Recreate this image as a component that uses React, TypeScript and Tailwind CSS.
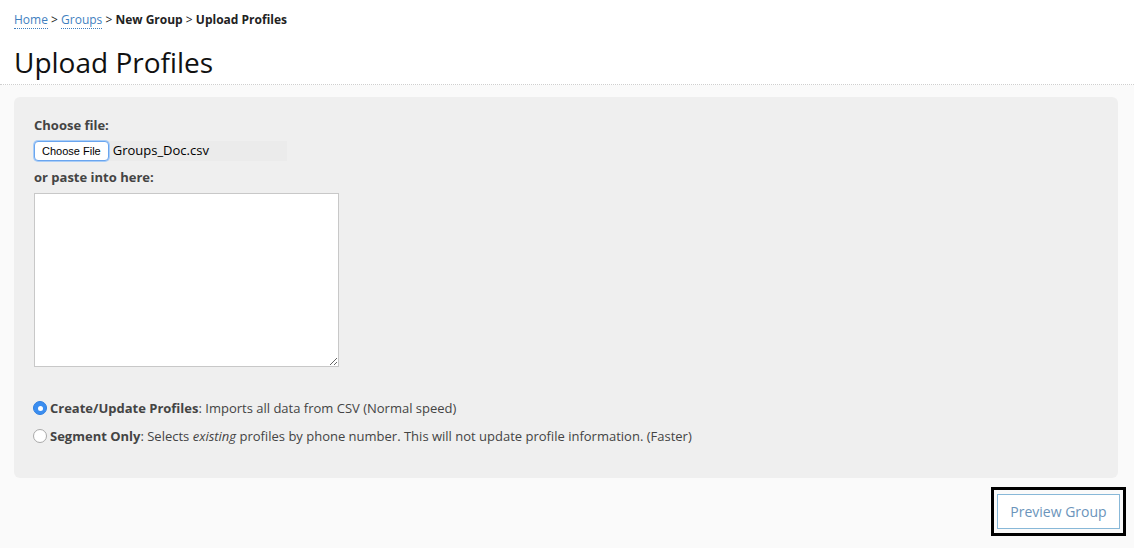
import React, { useState } from 'react';

type Mode = 'update' | 'segment';

const Radio: React.FC<{ checked: boolean; onClick: () => void }> = ({ checked, onClick }) => (
  <span
    onClick={onClick}
    className={
      checked
        ? 'flex h-[14px] w-[14px] shrink-0 items-center justify-center rounded-full bg-[#3b8ef0] border border-[#2f7fe0]'
        : 'flex h-[14px] w-[14px] shrink-0 items-center justify-center rounded-full bg-white border border-[#a9a9a9]'
    }
  >
    {checked && <span className="h-[5px] w-[5px] rounded-full bg-white" />}
  </span>
);

const App: React.FC = () => {
  const [mode, setMode] = useState<Mode>('update');
  const [pasted, setPasted] = useState('');

  return (
    <div className="min-h-[548px] w-full bg-[#fafafa] font-['Open_Sans',sans-serif] text-[#333]">
      <div className="bg-white px-[14px] pt-[11px] border-b border-dotted border-[#cfcfcf]">
        <nav className="text-[12px] leading-[17px] text-[#222]">
          <a href="#" className="text-[#3f7fbf] border-b border-dotted border-[#3f7fbf]">Home</a>
          <span> &gt; </span>
          <a href="#" className="text-[#3f7fbf] border-b border-dotted border-[#3f7fbf]">Groups</a>
          <span> &gt; </span>
          <span className="font-bold">New Group</span>
          <span> &gt; </span>
          <span className="font-bold">Upload Profiles</span>
        </nav>
        <h1 className="mt-[14px] pb-[2px] text-[28px] leading-[40px] text-[#111]">Upload Profiles</h1>
      </div>

      <div className="pl-[14px] pr-[16px] pt-[12px]">
        <div className="rounded-[6px] bg-[#efefef] px-[20px] pt-[19px] pb-[34px]">
          <label className="block text-[13px] font-bold leading-[18px] text-[#444]">Choose file:</label>
          <div className="mt-[7px] flex items-center">
            <div className="flex h-[20px] w-[253px] items-center bg-[#ebebeb]">
              <button className="h-[20px] rounded-[4px] border border-[#6aa5ee] bg-white px-[7px] font-['Liberation_Sans',sans-serif] text-[11px] leading-[16px] text-black shadow-[0_0_0_1px_#a9cdf7]">
                Choose File
              </button>
              <span className="ml-[4px] text-[13px] text-black">Groups_Doc.csv</span>
            </div>
          </div>
          <label className="mt-[7px] block text-[13px] font-bold leading-[18px] text-[#444]">or paste into here:</label>
          <textarea
            value={pasted}
            onChange={(e) => setPasted(e.target.value)}
            className="mt-[7px] block h-[174px] w-[305px] border border-[#c8c8c8] bg-white p-1 text-[13px] outline-none"
          />

          <div className="mt-[33px] flex flex-col gap-[12px] text-[13px] leading-[16px] text-[#444]">
            <label className="-ml-[1px] flex items-center gap-[3px]">
              <Radio checked={mode === 'update'} onClick={() => setMode('update')} />
              <span>
                <b>Create/Update Profiles</b>: Imports all data from CSV (Normal speed)
              </span>
            </label>
            <label className="-ml-[1px] flex items-center gap-[3px]">
              <Radio checked={mode === 'segment'} onClick={() => setMode('segment')} />
              <span>
                <b>Segment Only</b>: Selects <i>existing</i> profiles by phone number. This will not update profile information. (Faster)
              </span>
            </label>
          </div>
        </div>

        <div className="-mr-[8px] mt-[9px] flex justify-end">
          <div className="border-[3px] border-black px-[3px] py-[4px]">
            <button className="h-[35px] w-[123px] border border-[#88b8d8] bg-white text-[14px] text-[#6b94bb]">
              Preview Group
            </button>
          </div>
        </div>
      </div>
    </div>
  );
};

export default App;
